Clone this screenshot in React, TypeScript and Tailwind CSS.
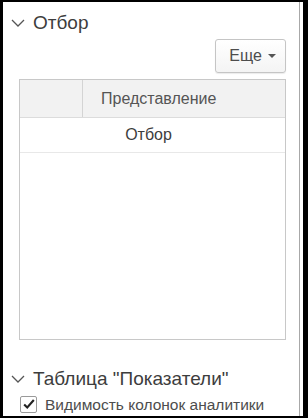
function SectionTitle({ title }: { title: string }) {
  return (
    <div className="flex items-center h-[26px] pl-[8px] text-[#3d3d3d]">
      <svg viewBox="0 0 14 8" className="w-[14px] h-[8px] mr-[8px] mt-[1px]">
        <path d="M1 1 L7 7 L13 1" fill="none" stroke="#555" strokeWidth="1.3" />
      </svg>
      <span className="text-[19px] leading-none">{title}</span>
    </div>
  );
}

export default function App() {
  return (
    <div
      className="w-[308px] h-[418px] bg-black flex pt-[2px] pl-[3px] pr-[5px] pb-[2px]"
      style={{ fontFamily: '"Liberation Sans", Arial, sans-serif' }}
    >
      <div className="flex-1 bg-white flex pr-[3px]">
        <div className="flex-1 flex flex-col border-r border-[#a8a8a8]">
          <div className="pt-[7px]">
            <SectionTitle title="Отбор" />
          </div>
          <div className="flex justify-end pr-[13px] mt-[4px]">
            <button className="h-[34px] w-[71px] flex items-center justify-center gap-[6px] pl-[4px] rounded-[3px] border border-[#c5c5c5] bg-gradient-to-b from-white to-[#f4f4f4] text-[16px] text-[#4d4d4d] shadow-[0_1px_1px_rgba(0,0,0,0.08)]">
              Еще
              <span className="block w-0 h-0 border-l-[4px] border-r-[4px] border-t-[4px] border-l-transparent border-r-transparent border-t-[#555]" />
            </button>
          </div>
          <div className="mt-[6px] ml-[16px] mr-[13px] h-[266px] border border-[#c8c8c8] flex flex-col">
            <div className="h-[38px] flex bg-[#f2f2f2] border-b border-[#dcdcdc] text-[16px] text-[#555]">
              <div className="w-[63px] border-r border-[#d4d4d4]" />
              <div className="flex-1 flex items-center pl-[18px]">Представление</div>
            </div>
            <div className="h-[35px] flex items-center justify-center pr-[8px] border-b border-[#e8e8e8] text-[16px] text-[#3d3d3d]">
              Отбор
            </div>
          </div>
          <div className="mt-[26px]">
            <SectionTitle title={'Таблица "Показатели"'} />
          </div>
          <label className="flex items-center pl-[17px] mt-[1px] text-[15.5px] text-[#4d4d4d]">
            <span className="w-[17px] h-[17px] border border-[#9a9a9a] rounded-[2px] bg-white flex items-center justify-center mr-[8px]">
              <svg viewBox="0 0 16 16" className="w-[14px] h-[14px]">
                <path d="M2.5 8.5 L6 12 L13.5 3.5" fill="none" stroke="#222" strokeWidth="2.4" />
              </svg>
            </span>
            Видимость колонок аналитики
          </label>
        </div>
      </div>
    </div>
  );
}
